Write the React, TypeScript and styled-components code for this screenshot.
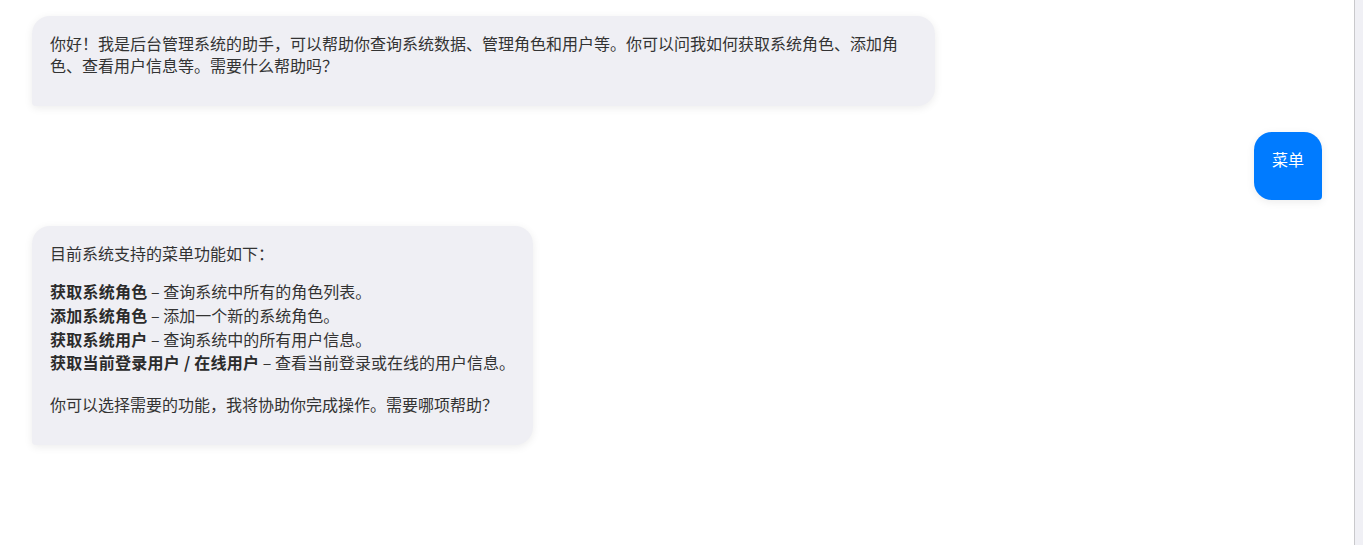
import React from "react";
import styled, { createGlobalStyle } from "styled-components";

const GlobalStyle = createGlobalStyle`
  html, body { margin: 0; padding: 0; background: #ffffff; }
  body { font-family: "Noto Sans CJK SC", "Noto Sans", sans-serif; }
`;

const Page = styled.div`
  display: flex;
  width: 100%;
  height: 545px;
  overflow: hidden;
`;

const ChatArea = styled.main`
  flex: 1;
  min-width: 0;
  display: flex;
  flex-direction: column;
  gap: 25.5px;
  padding: 15.5px 32px;
  box-sizing: border-box;
`;

const SidePanel = styled.aside`
  width: 8px;
  flex: none;
  border-left: 1px solid #c9c9cc;
  background: #f0f0f5;
`;

const Row = styled.div<{ $mine?: boolean }>`
  display: flex;
  justify-content: ${(p) => (p.$mine ? "flex-end" : "flex-start")};
`;

const Bubble = styled.div<{ $mine?: boolean }>`
  max-width: 70%;
  box-sizing: border-box;
  padding: 16px 18px 14px;
  font-size: 16px;
  line-height: 22.4px;
  border-radius: ${(p) => (p.$mine ? "18px 18px 4px 18px" : "18px 18px 18px 4px")};
  background: ${(p) => (p.$mine ? "#007bff" : "#efeff4")};
  color: ${(p) => (p.$mine ? "#ffffff" : "#333333")};
  box-shadow: 0 2px 8px rgba(0, 0, 0, 0.08);
`;

const Para = styled.p`
  margin: 0 0 16px;
`;

const List = styled.ul`
  list-style: none;
  margin: 0 0 18px;
  padding: 0;
  line-height: 23.7px;
`;

const Item = styled.li`
  white-space: nowrap;
`;

const Strong = styled.strong`
  font-weight: 700;
  color: #2b2b2b;
  letter-spacing: 0.25px;
`;

const features = [
  { title: "获取系统角色", desc: "查询系统中所有的角色列表。" },
  { title: "添加系统角色", desc: "添加一个新的系统角色。" },
  { title: "获取系统用户", desc: "查询系统中的所有用户信息。" },
  { title: "获取当前登录用户 / 在线用户", desc: "查看当前登录或在线的用户信息。" },
];

export default function App() {
  return (
    <>
      <GlobalStyle />
      <Page>
        <ChatArea>
          <Row>
            <Bubble>
              <Para>
                你好！我是后台管理系统的助手，可以帮助你查询系统数据、管理角色和用户等。你可以问我如何获取系统角色、添加角色、查看用户信息等。需要什么帮助吗？
              </Para>
            </Bubble>
          </Row>
          <Row $mine>
            <Bubble $mine>
              <Para>菜单</Para>
            </Bubble>
          </Row>
          <Row>
            <Bubble>
              <Para>目前系统支持的菜单功能如下：</Para>
              <List>
                {features.map((f) => (
                  <Item key={f.title}>
                    <Strong>{f.title}</Strong> – {f.desc}
                  </Item>
                ))}
              </List>
              <Para>你可以选择需要的功能，我将协助你完成操作。需要哪项帮助？</Para>
            </Bubble>
          </Row>
        </ChatArea>
        <SidePanel />
      </Page>
    </>
  );
}
